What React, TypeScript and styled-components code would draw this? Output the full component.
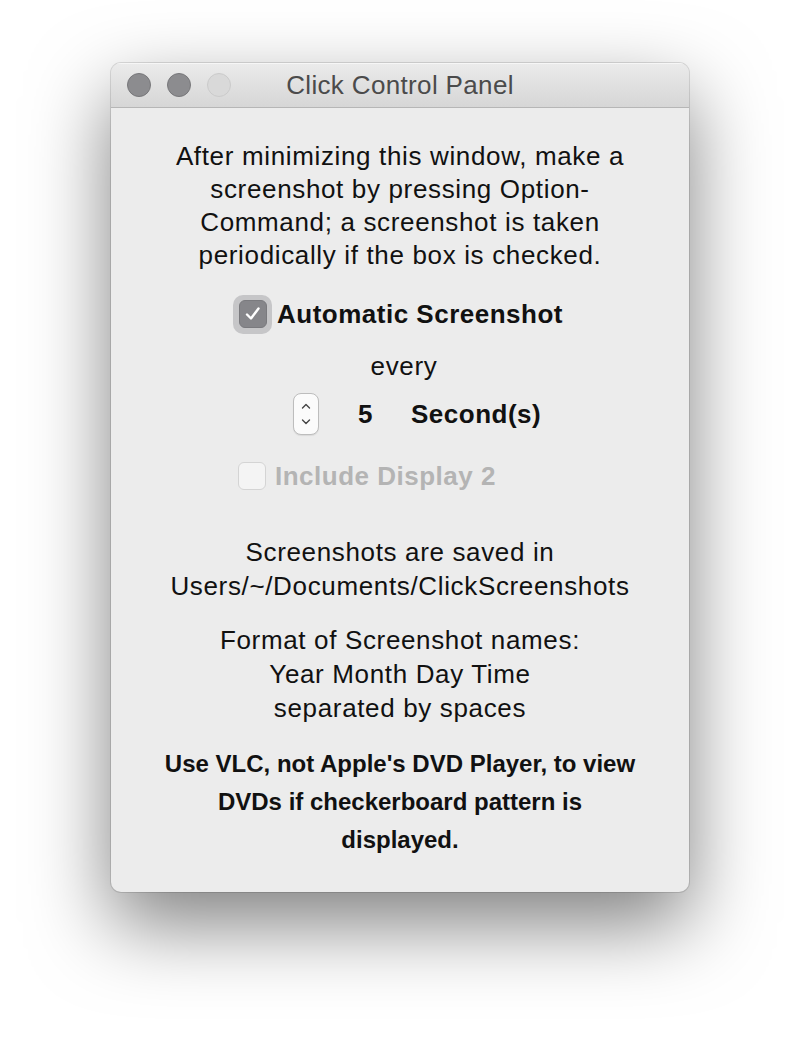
import styled, { createGlobalStyle } from "styled-components";

const GlobalStyle = createGlobalStyle`
    html, body {
        margin : 0;
        padding : 0;
        background : #ffffff;
    }
    body {
        font-family : 'Liberation Sans', Arial, sans-serif;
        -webkit-font-smoothing : antialiased;
    }
`

const App = () => {
    return (
        <StPage>
            <GlobalStyle />
            <StWindow>
                <StTitleBar>
                    <StLights>
                        <StLight />
                        <StLight />
                        <StLight disabled />
                    </StLights>
                    <StTitle>Click Control Panel</StTitle>
                </StTitleBar>
                <StBody>
                    <StText>
                        After minimizing this window, make a<br />
                        screenshot by pressing Option-<br />
                        Command; a screenshot is taken<br />
                        periodically if the box is checked.
                    </StText>
                    <StCheckRow>
                        <StCheckRing>
                            <StCheckBox checked>
                                <svg width="22" height="22" viewBox="0 0 22 22">
                                    <path d="M5 11.5 L9 15.5 L16.5 5.5" fill="none" stroke="#ffffff" strokeWidth="2.4" strokeLinecap="round" strokeLinejoin="round" />
                                </svg>
                            </StCheckBox>
                        </StCheckRing>
                        <StCheckLabel>Automatic Screenshot</StCheckLabel>
                    </StCheckRow>
                    <StEvery>every</StEvery>
                    <StStepperRow>
                        <StStepper>
                            <svg width="26" height="42" viewBox="0 0 26 42">
                                <path d="M9.5 15 L13 11.5 L16.5 15" fill="none" stroke="#444" strokeWidth="1.4" strokeLinecap="round" strokeLinejoin="round" />
                                <path d="M9.5 27 L13 30.5 L16.5 27" fill="none" stroke="#444" strokeWidth="1.4" strokeLinecap="round" strokeLinejoin="round" />
                            </svg>
                        </StStepper>
                        <StValue>5</StValue>
                        <StUnit>Second(s)</StUnit>
                    </StStepperRow>
                    <StDisabledRow>
                        <StCheckBox />
                        <StCheckLabel disabled>Include Display 2</StCheckLabel>
                    </StDisabledRow>
                    <StText spaced={44} lineHeight={34}>
                        Screenshots are saved in<br />
                        Users/~/Documents/ClickScreenshots
                    </StText>
                    <StText spaced={20} lineHeight={34}>
                        Format of Screenshot names:<br />
                        Year Month Day Time<br />
                        separated by spaces
                    </StText>
                    <StNote>
                        Use VLC, not Apple's DVD Player, to view<br />
                        DVDs if checkerboard pattern is<br />
                        displayed.
                    </StNote>
                </StBody>
            </StWindow>
        </StPage>
    );
};

export default App;

const StPage = styled.div`
    width : 800px;
    height : 1052px;
    padding : 63px 0 0 111px;
    box-sizing : border-box;
`

const StWindow = styled.div`
    width : 578px;
    height : 829px;
    border-radius : 10px;
    background : #ececec;
    overflow : hidden;
    box-shadow : 0 32px 80px rgba(0, 0, 0, .5), 0 0 0 1px rgba(0, 0, 0, .12);
    display : flex;
    flex-direction : column;
`

const StTitleBar = styled.div`
    height : 44px;
    flex-shrink : 0;
    display : flex;
    align-items : center;
    position : relative;
    background : linear-gradient(#ebebeb, #d6d6d6);
    border-bottom : 1px solid #b6b6b6;
    box-shadow : inset 0 1px 0 #f6f6f6;
`

const StLights = styled.div`
    display : flex;
    gap : 16px;
    padding-left : 16px;
`

const StLight = styled.div<{disabled? : boolean}>`
    width : 24px;
    height : 24px;
    border-radius : 50%;
    box-sizing : border-box;
    background : ${({disabled}) => disabled ? '#d9d9d9' : '#8c8c8f'};
    border : 1px solid ${({disabled}) => disabled ? '#cacaca' : '#77777a'};
`

const StTitle = styled.div`
    position : absolute;
    left : 0;
    right : 0;
    text-align : center;
    font-size : 26px;
    color : #4b4b4b;
    letter-spacing : 0.35px;
    pointer-events : none;
`

const StBody = styled.div`
    display : flex;
    flex-direction : column;
    align-items : center;
    padding-top : 32px;
`

const StText = styled.div<{spaced? : number, lineHeight? : number}>`
    margin-top : ${({spaced}) => spaced ?? 0}px;
    font-size : 26px;
    line-height : ${({lineHeight}) => lineHeight ?? 33}px;
    text-align : center;
    color : #111;
    letter-spacing : 0.65px;
`

const StCheckRow = styled.div`
    margin-top : 22px;
    height : 40px;
    display : flex;
    align-items : center;
    gap : 5px;
    margin-left : -4px;
`

const StCheckRing = styled.div`
    width : 39px;
    height : 39px;
    border-radius : 10px;
    background : #c6c6c8;
    display : flex;
    align-items : center;
    justify-content : center;
`

const StCheckBox = styled.div<{checked? : boolean}>`
    width : 28px;
    height : 28px;
    box-sizing : border-box;
    border-radius : 6px;
    display : flex;
    align-items : center;
    justify-content : center;
    background : ${({checked}) => checked ? '#86868a' : '#f4f4f4'};
    border : 1px solid ${({checked}) => checked ? '#7a7a7e' : '#d4d4d4'};
`

const StCheckLabel = styled.div<{disabled? : boolean}>`
    font-size : 26px;
    font-weight : 700;
    letter-spacing : 0.5px;
    color : ${({disabled}) => disabled ? '#b4b4b4' : '#111'};
`

const StEvery = styled.div`
    margin-top : 16px;
    font-size : 26px;
    line-height : 33px;
    letter-spacing : 0.65px;
    color : #111;
    margin-left : 8px;
`

const StStepperRow = styled.div`
    margin-top : 10px;
    align-self : flex-start;
    margin-left : 182px;
    display : flex;
    align-items : center;
    height : 42px;
`

const StStepper = styled.div`
    width : 26px;
    height : 42px;
    box-sizing : border-box;
    border : 1px solid #bdbdbd;
    border-radius : 8px;
    background : #fbfbfb;
    box-shadow : 0 1px 1px rgba(0, 0, 0, .08);
    display : flex;
    svg {
        margin : -1px;
    }
`

const StValue = styled.div`
    margin-left : 39px;
    width : 53px;
    font-size : 26px;
    font-weight : 700;
    color : #111;
`

const StUnit = styled.div`
    font-size : 26px;
    font-weight : 700;
    letter-spacing : 0.5px;
    color : #111;
`

const StDisabledRow = styled.div`
    margin-top : 26px;
    align-self : flex-start;
    margin-left : 127px;
    height : 30px;
    display : flex;
    align-items : center;
    gap : 9px;
`

const StNote = styled.div`
    margin-top : 20px;
    font-size : 24px;
    font-weight : 700;
    line-height : 38px;
    text-align : center;
    color : #111;
`
